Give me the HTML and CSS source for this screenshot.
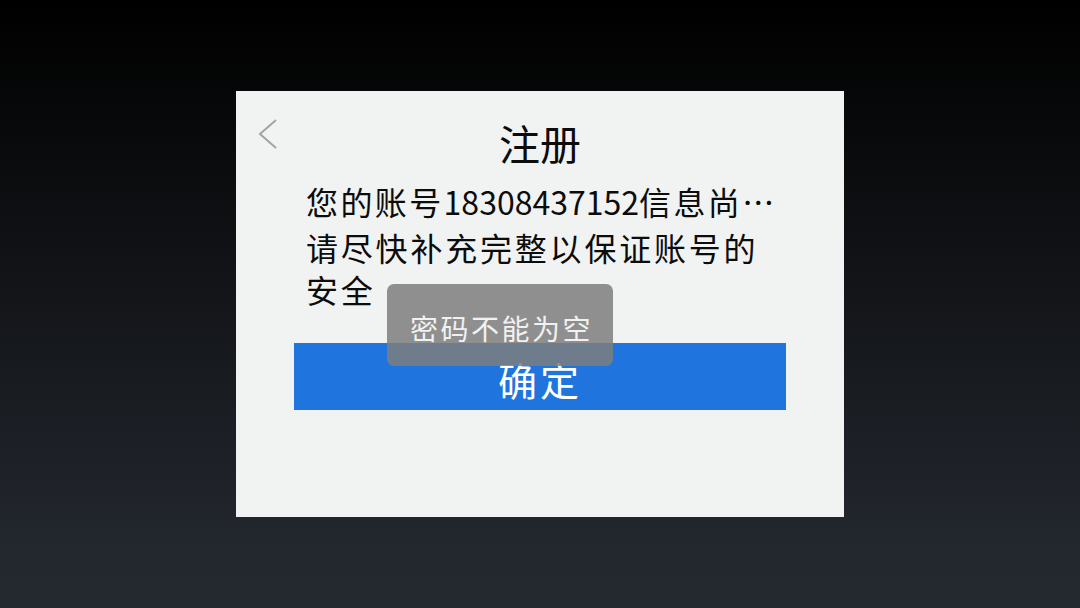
FILE: index.html
```html
<!DOCTYPE html>
<html>
  <head>
    <meta charset="utf-8">
    <title>注册</title>
    <link rel="stylesheet" href="styles.css">
  </head>
  <body>
    <div class="card">
      <svg class="back" width="22" height="34" viewBox="0 0 22 34">
        <path d="M19 3 L3 17 L19 31" fill="none" stroke="#a3a3a3" stroke-width="2"/>
      </svg>
      <h1 class="title">注册</h1>
      <p class="msg first">您的账号<span class="num">18308437152</span>信息尚⋯</p>
      <p class="msg second">请尽快补充完整以保证账号的<br>安全</p>
      <div class="btn">确定</div>
      <div class="toast">密码不能为空</div>
    </div>
  </body>
</html>
```

FILE: styles.css
```css
html, body {
  margin: 0;
  height: 100%; }
body {
  display: flex;
  align-items: center;
  justify-content: center;
  background: linear-gradient(180deg, #000000 0%, #23272e 90%, #24282f 100%);
  font-family: "Noto Sans CJK SC", "Liberation Sans", sans-serif; }
.card {
  position: relative;
  box-sizing: border-box;
  width: 608px;
  height: 426px;
  padding: 25px 58px 0 70px;
  background-color: #f1f2f2;
  color: #0c0c0c; }
.back {
  position: absolute;
  left: 21px;
  top: 26px; }
.title {
  margin: 0 0 11px -12px;
  text-align: center;
  font-size: 41px;
  font-weight: 400;
  line-height: 52px; }
.msg {
  margin: 0;
  font-size: 32px;
  letter-spacing: 2.4px;
  line-height: 44px;
  white-space: nowrap; }
.msg .num {
  letter-spacing: 0; }
.second {
  margin-top: 3px;
  letter-spacing: 2.8px;
  line-height: 42px; }
.btn {
  margin: 33px 0 0 -12px;
  width: 492px;
  height: 67px;
  background-color: #1f74de;
  color: #ffffff;
  text-align: center;
  font-size: 39px;
  letter-spacing: 3px;
  line-height: 72px; }
.toast {
  position: absolute;
  left: 151px;
  top: 193px;
  width: 226px;
  height: 82px;
  padding-left: 3px;
  box-sizing: border-box;
  border-radius: 7px;
  background-color: rgba(126, 126, 126, .85);
  color: #f1f1f1;
  text-align: center;
  font-size: 28px;
  letter-spacing: 2.5px;
  line-height: 88px; }
```
